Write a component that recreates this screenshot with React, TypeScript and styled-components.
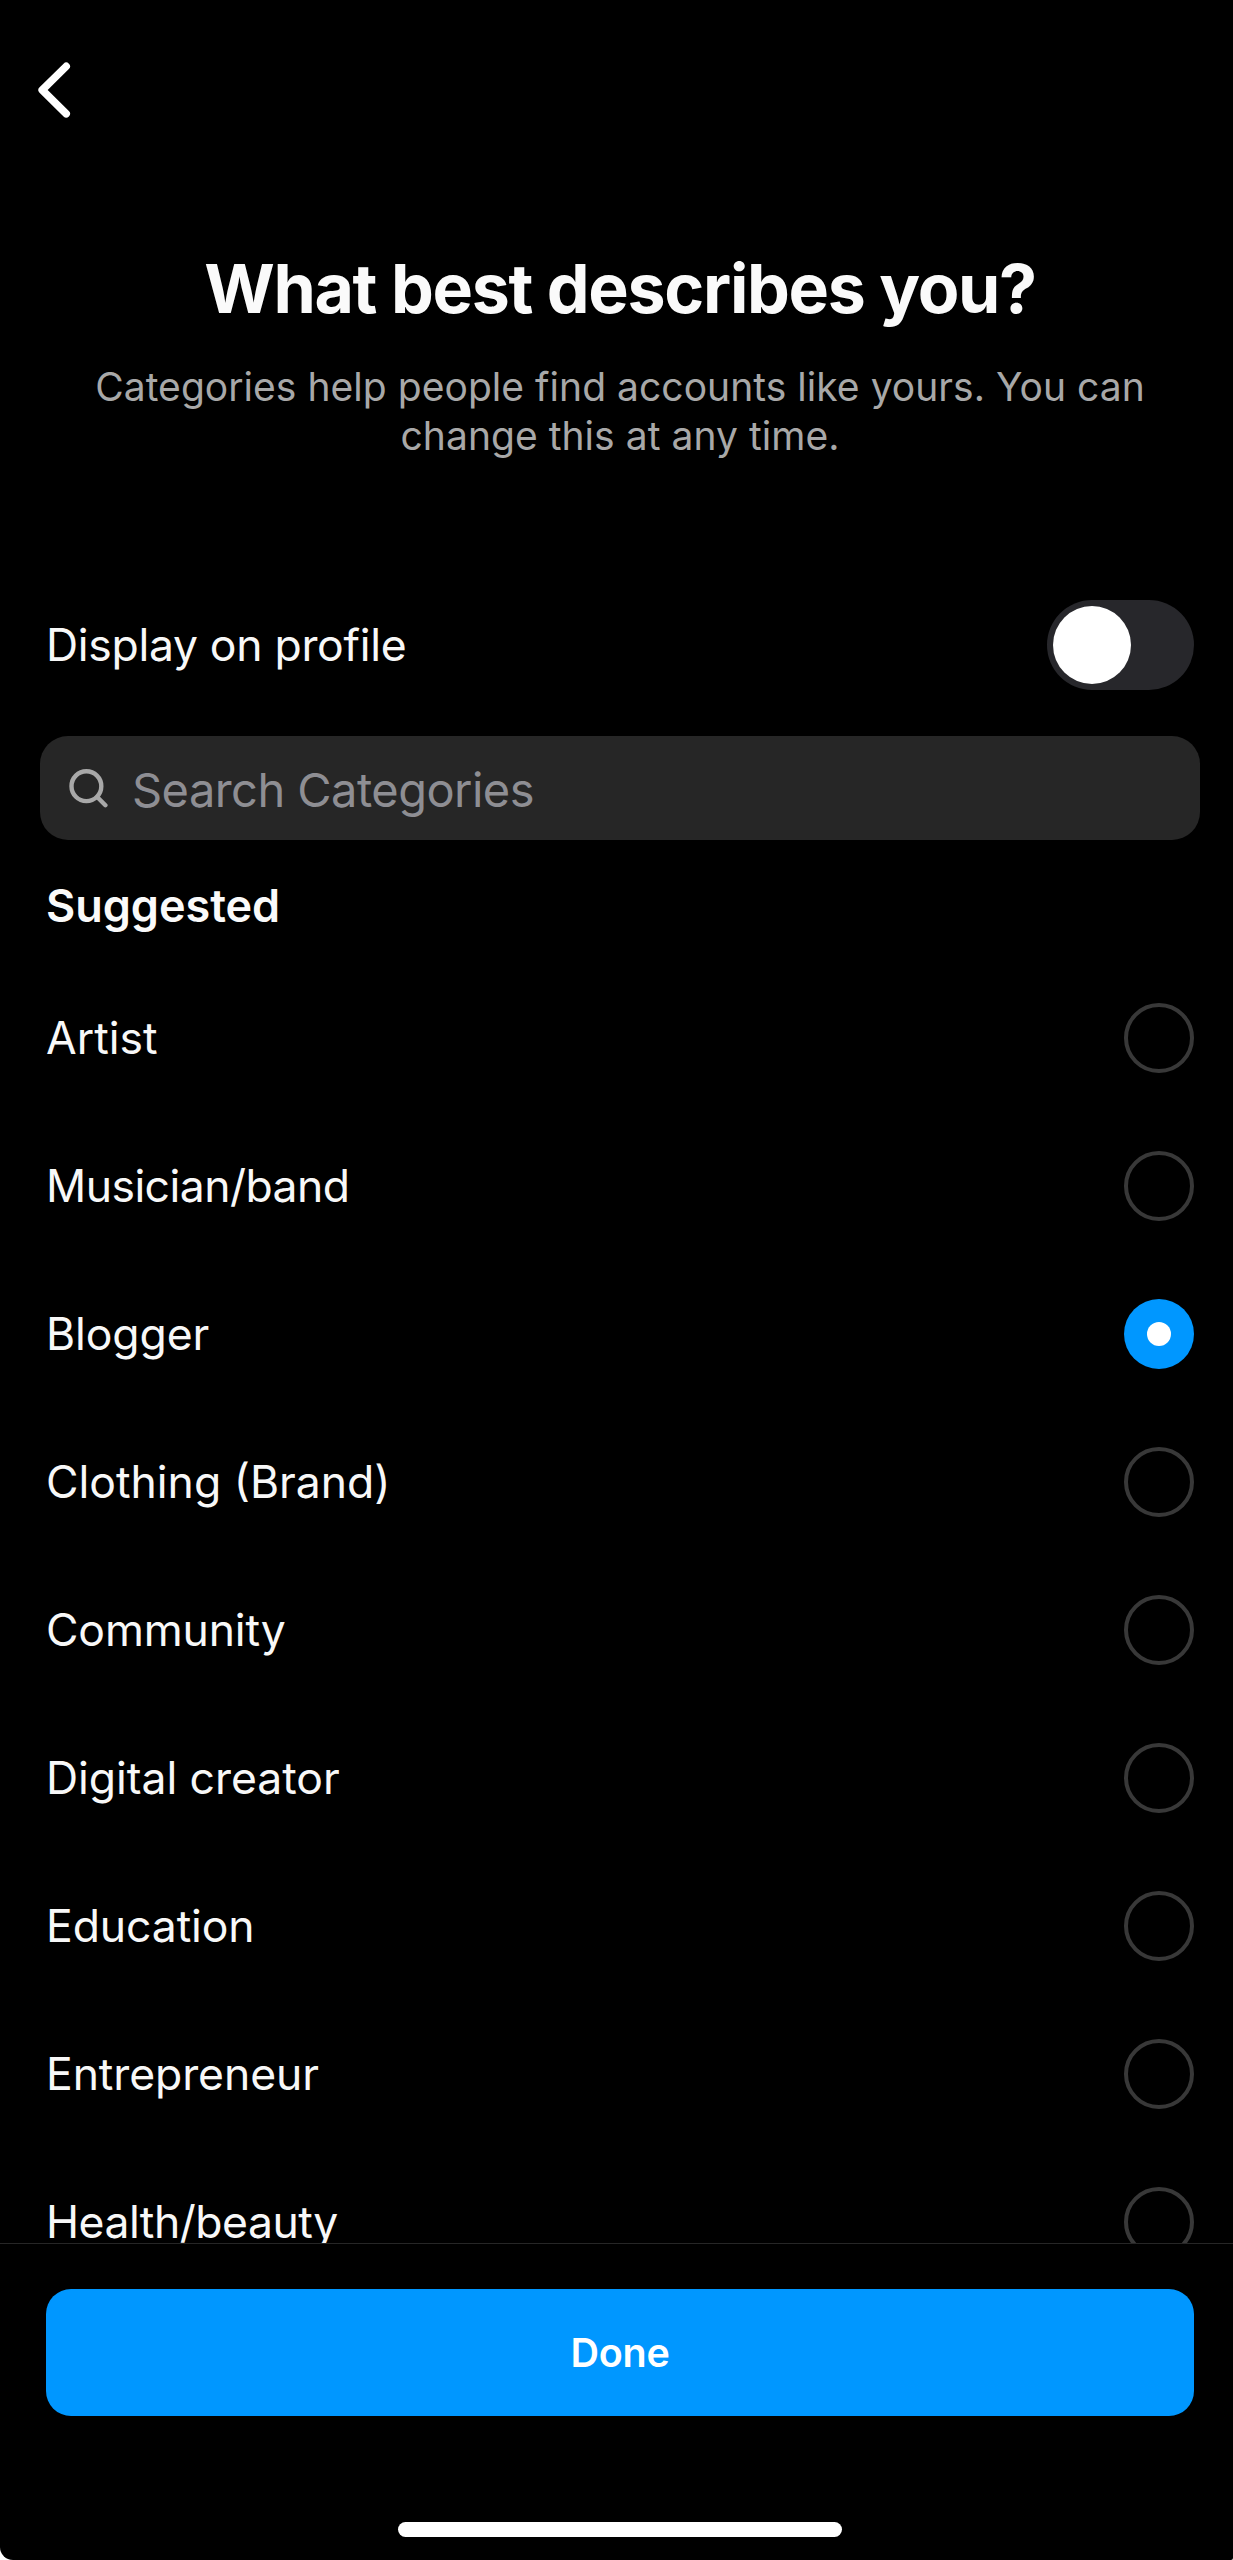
import React, { useState } from "react";
import styled, { createGlobalStyle } from "styled-components";

const Global = createGlobalStyle`
  *, *::before, *::after { box-sizing: border-box; }
  body { margin: 0; background: #fff; font-family: Inter, "Liberation Sans", sans-serif; color: #f8f8f8; }
  button, input { font: inherit; }
`;
const Screen = styled.main`
  height: 2560px; width: 1233px; background: #000; display: flex; flex-direction: column; overflow: hidden;
  border-radius: 0 0 2px 13px;
`;
const Nav = styled.nav`
  flex: none; height: 180px; padding: 60px 0 0 36px;
`;
const IconButton = styled.button`
  display: block; border: 0; padding: 0; background: none; color: #fff; line-height: 0;
`;
const Header = styled.header`
  flex: none; height: 412px; padding: 66px 0 0 7px; text-align: center;
`;
const Title = styled.h1`
  margin: 0; font-size: 68px; line-height: 84px; font-weight: 700; letter-spacing: -1.32px; color: #fafafa;
`;
const Subtitle = styled.p`
  margin: 32px auto 0; font-size: 39px; line-height: 49px; letter-spacing: 0.04px; color: #a8a8a8; white-space: nowrap;
`;
const SettingRow = styled.div`
  flex: none; height: 106px; padding: 0 39px 0 46px; display: flex; align-items: center; justify-content: space-between;
`;
const Label = styled.span<{ $track: number }>`
  font-size: 44.5px; line-height: 56px; letter-spacing: ${(p) => p.$track}px;
`;
const Switch = styled.button`
  width: 147px; height: 90px; border: 0; border-radius: 45px; padding: 6px; background: #27272b; display: flex;
`;
const Knob = styled.span`
  width: 78px; height: 78px; border-radius: 50%; background: #fff;
`;
const Search = styled.label`
  flex: none; height: 104px; margin: 38px 33px 0 40px; border-radius: 28px; background: #262626;
  padding-left: 29px; display: flex; align-items: center; gap: 23px; color: #a8a8a8;
`;
const Input = styled.input`
  flex: 1; border: 0; outline: 0; padding: 2px 0 0; background: none; color: #fff; font-size: 47px; letter-spacing: -0.55px;
  &::placeholder { color: #8e8e93; opacity: 1; }
`;
const SectionTitle = styled.h2`
  flex: none; margin: 38px 0 0 46px; font-size: 45px; line-height: 56px; font-weight: 600; letter-spacing: -0.05px; color: #fafafa;
`;
const List = styled.div`
  flex: 1; min-height: 0; overflow: hidden; padding-top: 30px;
`;
const Option = styled.div`
  height: 148px; padding: 0 39px 0 46px; display: flex; align-items: center; justify-content: space-between;
`;
const Radio = styled.span<{ $on: boolean }>`
  width: 70px; height: 70px; border-radius: 50%; display: flex; align-items: center; justify-content: center;
  border: ${(p) => (p.$on ? "0" : "4px solid #383838")}; background: ${(p) => (p.$on ? "#0097ff" : "none")};
  &::after { content: ""; width: 24px; height: 24px; border-radius: 50%; background: ${(p) => (p.$on ? "#fff" : "none")}; }
`;
const Footer = styled.footer`
  flex: none; height: 317px; border-top: 1px solid #262626; padding: 45px 39px 23px 46px;
  display: flex; flex-direction: column; justify-content: space-between; align-items: center;
`;
const Done = styled.button`
  width: 100%; height: 127px; border: 0; border-radius: 25px; background: #0097ff; color: #fff;
  font-size: 39.5px; font-weight: 600; letter-spacing: -0.3px;
`;
const HomeBar = styled.div`
  width: 444px; height: 15px; border-radius: 8px; background: #fff;
`;

const categories = [
  { name: "Artist", track: 0 },
  { name: "Musician/band", track: -0.54 },
  { name: "Blogger", track: -0.1 },
  { name: "Clothing (Brand)", track: 0 },
  { name: "Community", track: -0.15 },
  { name: "Digital creator", track: -0.05 },
  { name: "Education", track: -0.1 },
  { name: "Entrepreneur", track: -0.1 },
  { name: "Health/beauty", track: -0.5 },
];

export default function App() {
  const [selected, setSelected] = useState("Blogger");
  return (
    <>
      <Global />
      <Screen>
        <Nav>
          <IconButton aria-label="Back">
            <svg width="38" height="60" viewBox="0 0 38 60" fill="none" stroke="currentColor" strokeWidth="7.6" strokeLinecap="round" strokeLinejoin="round"><path d="M30.2 6.4 6.2 30 30.2 53.8" /></svg>
          </IconButton>
        </Nav>
        <Header>
          <Title>What best describes you?</Title>
          <Subtitle>Categories help people find accounts like yours. You can<br />change this at any time.</Subtitle>
        </Header>
        <SettingRow>
          <Label $track={-0.3}>Display on profile</Label>
          <Switch role="switch" aria-checked={false} aria-label="Display on profile"><Knob /></Switch>
        </SettingRow>
        <Search>
          <svg width="40" height="40" viewBox="0 0 40 40" fill="none" stroke="currentColor" strokeWidth="4.4" strokeLinecap="round"><circle cx="17.4" cy="18.2" r="14.9" /><path d="M28.2 29 36.4 37.2" /></svg>
          <Input placeholder="Search Categories" />
        </Search>
        <SectionTitle>Suggested</SectionTitle>
        <List role="radiogroup">
          {categories.map(({ name, track }) => (
            <Option key={name} role="radio" aria-checked={selected === name} onClick={() => setSelected(name)}>
              <Label $track={track}>{name}</Label>
              <Radio $on={selected === name} />
            </Option>
          ))}
        </List>
        <Footer>
          <Done>Done</Done>
          <HomeBar />
        </Footer>
      </Screen>
    </>
  );
}
